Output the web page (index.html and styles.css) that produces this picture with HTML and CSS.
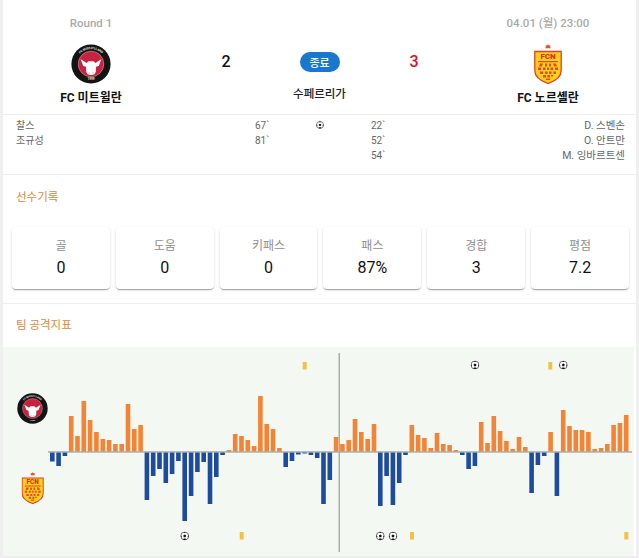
FILE: index.html
```html
<!DOCTYPE html>
<html lang="ko">
<head>
<meta charset="utf-8">
<title>FC 미트윌란 - FC 노르셸란</title>
<link rel="stylesheet" href="styles.css">
</head>
<body>
<svg class="defs" xmlns="http://www.w3.org/2000/svg">
  <symbol id="fcm" viewBox="0 0 40 40">
    <circle cx="20" cy="20" r="19.6" fill="#141414"/>
    <circle cx="20" cy="20" r="12.800" fill="#c9213f" stroke="#eee" stroke-width=".4"/>
    <path id="fcmTop" d="M5 20A15 15 0 0 1 35 20" fill="none"/>
    <text class="ring"><textPath href="#fcmTop" startOffset="50%">FC MIDTJYLLAND</textPath></text>
    <text class="ring" x="20" y="36.400">1999</text>
    <path d="M9.500 15L15.500 19 17.500 17.200H22.500L24.500 19 30.500 15 27.800 22 25 22.800 24.800 27.500Q24.300 31 20 31 15.700 31 15.200 27.500L15 22.800 12.200 22Z" fill="#fff"/>
    <path d="M17.600 28.400h1.300v1h-1.300zM21.100 28.400h1.300v1h-1.300z" fill="#d9a3ad"/>
  </symbol>
  <symbol id="fcn" viewBox="0 0 28 40">
    <path d="M14 .3l1 1.300 1.600-.2-.5 1.500.9 1.300H11l.9-1.300-.5-1.500 1.600.2z" fill="#e0503a"/>
    <path d="M.8 7.500H27.200V26.500Q27.200 35 14 39.500 .8 35 .8 26.500Z" fill="#fbcf1e" stroke="#e4411f" stroke-width="1.300"/>
    <text class="fcn-text" x="14" y="15">FCN</text>
    <path d="M3 16.300H25V26.500Q25 33 14 37 3 33 3 26.500Z" fill="#fbcf1e"/>
    <path d="M4 17h20v1.200H4zM6 19.500h3l-1 3H5zM11 19.500h2v3h-2zM15 19.500h2v3h-2zM19 19.500h3l1 3h-3zM4 23.500h3v2.500H4zM9 23.500h2.500v2.500H9zM13 23.500h2v2.500h-2zM16.500 23.500H19v2.500h-2.500zM21 23.500h3v2.500h-3zM6 27.500h3V30H6zM11 27.500h2.500V30H11zM15 27.500h2.500V30H15zM19.500 27.500h2.500V30h-2.500zM9 31h3v2.500H9zM13.500 31h2.500v2.500h-2.500zM17 31h2v1.500h-2zM12 34.500h4V36h-4z" fill="#e8481c"/>
  </symbol>
  <symbol id="ball" viewBox="0 0 10 10">
    <circle cx="5" cy="5" r="4.400" fill="#fff" stroke="#222" stroke-width=".7"/>
    <path d="M5 3.300L6.600 4.500 6 6.300H4L3.400 4.500Z" fill="#111"/>
    <path d="M3.800.9L5 1.800 6.200.9 5.600.5H4.400ZM.9 4.200L1.800 5.500 1 6.800.7 5.500ZM9.100 4.200L8.200 5.500 9 6.800 9.300 5.500ZM3 8.800L4 7.900H6L7 8.800 5 9.500Z" fill="#111"/>
  </symbol>
</svg>

<main class="page">
  <section class="match">
    <div class="team">
      <div class="meta">Round 1</div>
      <svg class="logo-fcm"><use href="#fcm"/></svg>
      <div class="team-name">FC 미트윌란</div>
    </div>
    <div class="score">2</div>
    <div class="status">
      <span class="pill">종료</span>
      <div class="league">수페르리가</div>
    </div>
    <div class="score score-win">3</div>
    <div class="team">
      <div class="meta">04.01 (월) 23:00</div>
      <svg class="logo-fcn"><use href="#fcn"/></svg>
      <div class="team-name">FC 노르셸란</div>
    </div>
  </section>

  <section class="events">
    <div class="ev-names"><div>찰스</div><div>조규성</div></div>
    <div class="ev-mins"><div>67`</div><div>81`</div></div>
    <div class="ev-ball"><svg class="ball-ic"><use href="#ball"/></svg></div>
    <div class="ev-mins"><div>22`</div><div>52`</div><div>54`</div></div>
    <div class="ev-names ev-right"><div>D. 스벤손</div><div>O. 안트만</div><div>M. 잉바르트센</div></div>
  </section>

  <section class="players">
    <h2 class="section-title">선수기록</h2>
    <div class="stats">
      <div class="stat"><div class="stat-label">골</div><div class="stat-value">0</div></div>
      <div class="stat"><div class="stat-label">도움</div><div class="stat-value">0</div></div>
      <div class="stat"><div class="stat-label">키패스</div><div class="stat-value">0</div></div>
      <div class="stat"><div class="stat-label">패스</div><div class="stat-value">87%</div></div>
      <div class="stat"><div class="stat-label">경합</div><div class="stat-value">3</div></div>
      <div class="stat"><div class="stat-label">평점</div><div class="stat-value">7.2</div></div>
    </div>
  </section>

  <section class="attack">
    <h2 class="section-title">팀 공격지표</h2>
    <svg class="chart" viewBox="3 347 631 209" xmlns="http://www.w3.org/2000/svg">
      <use href="#fcm" x="17" y="393" width="31" height="31"/>
      <use href="#fcn" x="21.500" y="472" width="22.400" height="32"/>
      <g class="up">
        <rect x="68.9" y="416" width="4.6" height="36"/>
        <rect x="75.2" y="436" width="4.6" height="16"/>
        <rect x="81.5" y="401" width="4.6" height="51"/>
        <rect x="87.8" y="420" width="4.6" height="32"/>
        <rect x="94.1" y="432" width="4.6" height="20"/>
        <rect x="100.5" y="439" width="4.6" height="13"/>
        <rect x="106.8" y="440" width="4.6" height="12"/>
        <rect x="113.1" y="444" width="4.6" height="8"/>
        <rect x="119.4" y="444" width="4.6" height="8"/>
        <rect x="125.7" y="404" width="4.6" height="48"/>
        <rect x="132" y="429" width="4.6" height="23"/>
        <rect x="138.3" y="425" width="4.6" height="27"/>
        <rect x="226.6" y="450" width="4.6" height="2"/>
        <rect x="232.9" y="434" width="4.6" height="18"/>
        <rect x="239.2" y="436" width="4.6" height="16"/>
        <rect x="245.5" y="440" width="4.6" height="12"/>
        <rect x="251.8" y="446" width="4.6" height="6"/>
        <rect x="258.1" y="396" width="4.6" height="56"/>
        <rect x="264.4" y="424" width="4.6" height="28"/>
        <rect x="270.7" y="429" width="4.6" height="23"/>
        <rect x="277.1" y="448" width="4.6" height="4"/>
        <rect x="333.8" y="437" width="4.6" height="15"/>
        <rect x="340.1" y="444" width="4.6" height="8"/>
        <rect x="346.4" y="440" width="4.6" height="12"/>
        <rect x="352.7" y="419" width="4.6" height="33"/>
        <rect x="359" y="432" width="4.6" height="20"/>
        <rect x="365.4" y="439" width="4.6" height="13"/>
        <rect x="371.7" y="424" width="4.6" height="28"/>
        <rect x="409.5" y="425" width="4.6" height="27"/>
        <rect x="415.8" y="435" width="4.6" height="17"/>
        <rect x="422.1" y="438" width="4.6" height="14"/>
        <rect x="428.4" y="448" width="4.6" height="4"/>
        <rect x="434.7" y="433" width="4.6" height="19"/>
        <rect x="441" y="444" width="4.6" height="8"/>
        <rect x="447.3" y="445" width="4.6" height="7"/>
        <rect x="453.6" y="450" width="4.6" height="2"/>
        <rect x="478.9" y="422" width="4.6" height="30"/>
        <rect x="485.2" y="443" width="4.6" height="9"/>
        <rect x="491.5" y="416" width="4.6" height="36"/>
        <rect x="497.8" y="431" width="4.6" height="21"/>
        <rect x="504.1" y="441" width="4.6" height="11"/>
        <rect x="510.4" y="449" width="4.6" height="3"/>
        <rect x="516.7" y="437" width="4.6" height="15"/>
        <rect x="523" y="447" width="4.6" height="5"/>
        <rect x="548.3" y="432" width="4.6" height="20"/>
        <rect x="560.9" y="410" width="4.6" height="42"/>
        <rect x="567.2" y="426" width="4.6" height="26"/>
        <rect x="573.5" y="430" width="4.6" height="22"/>
        <rect x="579.8" y="430" width="4.6" height="22"/>
        <rect x="586.1" y="432" width="4.6" height="20"/>
        <rect x="592.4" y="449" width="4.6" height="3"/>
        <rect x="598.7" y="448" width="4.6" height="4"/>
        <rect x="605" y="444" width="4.6" height="8"/>
        <rect x="611.3" y="425" width="4.6" height="27"/>
        <rect x="617.6" y="423" width="4.6" height="29"/>
        <rect x="623.9" y="415" width="4.6" height="37"/>
      </g>
      <g class="down">
        <rect x="50" y="452" width="4.6" height="9.5"/>
        <rect x="56.3" y="452" width="4.6" height="14"/>
        <rect x="62.6" y="452" width="4.6" height="4"/>
        <rect x="144.6" y="452" width="4.6" height="48"/>
        <rect x="150.9" y="452" width="4.6" height="24"/>
        <rect x="157.2" y="452" width="4.6" height="17"/>
        <rect x="163.5" y="452" width="4.6" height="31"/>
        <rect x="169.8" y="452" width="4.6" height="22"/>
        <rect x="176.1" y="452" width="4.6" height="9"/>
        <rect x="182.4" y="452" width="4.6" height="69"/>
        <rect x="188.8" y="452" width="4.6" height="44"/>
        <rect x="195.1" y="452" width="4.6" height="20"/>
        <rect x="201.4" y="452" width="4.6" height="10"/>
        <rect x="207.7" y="452" width="4.6" height="52"/>
        <rect x="214" y="452" width="4.6" height="25"/>
        <rect x="220.3" y="452" width="4.6" height="3"/>
        <rect x="283.4" y="452" width="4.6" height="15"/>
        <rect x="289.7" y="452" width="4.6" height="9"/>
        <rect x="296" y="452" width="4.6" height="2.500"/>
        <rect x="302.3" y="452" width="4.6" height="1.500"/>
        <rect x="308.6" y="452" width="4.6" height="3"/>
        <rect x="314.9" y="452" width="4.6" height="6"/>
        <rect x="321.2" y="452" width="4.6" height="52"/>
        <rect x="327.5" y="452" width="4.6" height="28"/>
        <rect x="378" y="452" width="4.6" height="54"/>
        <rect x="384.3" y="452" width="4.6" height="24"/>
        <rect x="390.6" y="452" width="4.6" height="53"/>
        <rect x="396.9" y="452" width="4.6" height="31"/>
        <rect x="403.2" y="452" width="4.6" height="3"/>
        <rect x="460" y="452" width="4.6" height="3"/>
        <rect x="466.3" y="452" width="4.6" height="17"/>
        <rect x="472.6" y="452" width="4.6" height="14"/>
        <rect x="529.3" y="452" width="4.6" height="41"/>
        <rect x="535.6" y="452" width="4.6" height="13"/>
        <rect x="541.9" y="452" width="4.6" height="4"/>
        <rect x="554.6" y="452" width="4.6" height="44"/>
      </g>
      <rect class="axis" x="48" y="451.200" width="584" height="1.500"/>
      <rect class="axis" x="338.500" y="353" width="1.500" height="199"/>
      <g class="card">
        <rect x="302.700" y="362" width="4" height="7.500"/>
        <rect x="548.300" y="362" width="4" height="7.500"/>
        <rect x="239.700" y="532" width="4" height="7.500"/>
        <rect x="410" y="532" width="4" height="7.500"/>
        <rect x="624.300" y="532" width="4" height="7.500"/>
      </g>
      <use href="#ball" x="470.500" y="360.500" width="9" height="9"/>
      <use href="#ball" x="558.800" y="360.500" width="9" height="9"/>
      <use href="#ball" x="180.200" y="531.500" width="9" height="9"/>
      <use href="#ball" x="375.800" y="531.500" width="9" height="9"/>
      <use href="#ball" x="388.500" y="531.500" width="9" height="9"/>
    </svg>
  </section>
</main>
</body>
</html>
```

FILE: styles.css
```css
* {
  box-sizing: border-box;
}

html,
body {
  margin: 0;
  padding: 0;
  background: #fff;
}

body {
  font-family: Roboto, "Noto Sans CJK KR", sans-serif;
  color: #222;
}

.defs {
  display: none;
}

.ring {
  font-family: Roboto, sans-serif;
  font-size: 3px;
  font-weight: 700;
  fill: #eee;
  text-anchor: middle;
}

.fcn-text {
  font-family: Roboto, sans-serif;
  font-size: 8px;
  font-weight: 900;
  fill: #d9301c;
  text-anchor: middle;
}

.page {
  width: 639px;
  height: 558px;
  overflow: hidden;
  border-left: 3px solid #efefef;
  border-right: 3px solid #efefef;
  border-bottom: 2px solid #efefef;
}

.match {
  display: grid;
  grid-template-columns: 176px 94px 93px 94px 176px;
  height: 114px;
  padding-top: 15px;
}

.team {
  display: flex;
  flex-direction: column;
  align-items: center;
}

.meta {
  font-size: 11.500px;
  font-weight: 500;
  line-height: 16px;
  color: #aaa;
  margin-bottom: 13px;
}

.logo-fcm {
  display: block;
  width: 40px;
  height: 40px;
}

.logo-fcn {
  display: block;
  width: 28px;
  height: 40px;
}

.team-name {
  margin-top: 6px;
  font-size: 12px;
  font-weight: 700;
  line-height: 16px;
  color: #111;
}

.score {
  padding-top: 37px;
  text-align: center;
  font-size: 16px;
  font-weight: 500;
  line-height: 20px;
  color: #111;
}

.score-win {
  padding-left: 2px;
  color: #e0101a;
}

.status {
  display: flex;
  flex-direction: column;
  align-items: center;
  padding-top: 37px;
}

.pill {
  display: flex;
  align-items: center;
  justify-content: center;
  width: 40px;
  height: 20px;
  border-radius: 10px;
  background: #1976d2;
  color: #fff;
  font-size: 11px;
  font-weight: 500;
}

.league {
  margin-top: 14px;
  font-size: 11.500px;
  font-weight: 500;
  line-height: 16px;
  color: #222;
}

.events {
  display: grid;
  grid-template-columns: 239px 61px 55px 60px 1fr;
  height: 61px;
  padding: 3px 11px 0 13px;
  border-top: 1px solid #eee;
  border-bottom: 1px solid #eee;
  font-size: 10px;
  line-height: 15px;
  color: #666;
}

.ev-right {
  font-size: 10.500px;
  text-align: right;
}

.ev-ball {
  padding-top: 3px;
}

.ball-ic {
  display: block;
  width: 8px;
  height: 8px;
}

.section-title {
  margin: 0;
  padding-left: 13px;
  font-size: 11.500px;
  font-weight: 400;
  line-height: 16px;
  color: #dd8a3e;
}

.players {
  height: 129px;
  padding-top: 14px;
  border-bottom: 1px solid #eee;
}

.stats {
  display: flex;
  gap: 6px;
  margin-top: 22px;
  padding: 0 7px 0 9px;
}

.stat {
  flex: 1;
  height: 62px;
  padding-top: 11px;
  border-radius: 4px;
  background: #fff;
  text-align: center;
  box-shadow: 0 2px 1px -1px rgba(0, 0, 0, .2), 0 1px 1px 0 rgba(0, 0, 0, .14), 0 1px 3px 0 rgba(0, 0, 0, .12);
}

.stat-label {
  font-size: 12px;
  line-height: 16px;
  color: #8f8f8f;
}

.stat-value {
  margin-top: 4px;
  font-size: 16px;
  line-height: 20px;
  color: #111;
}

.attack {
  padding-top: 13px;
}

.attack .section-title {
  margin-bottom: 14px;
}

.chart {
  display: block;
  width: 631px;
  height: 209px;
  background: #f3f9f2;
}

.up {
  fill: #f58336;
}

.down {
  fill: #1d4b9e;
}

.axis {
  fill: #a9aeaa;
}

.card {
  fill: #f6c143;
}
```
